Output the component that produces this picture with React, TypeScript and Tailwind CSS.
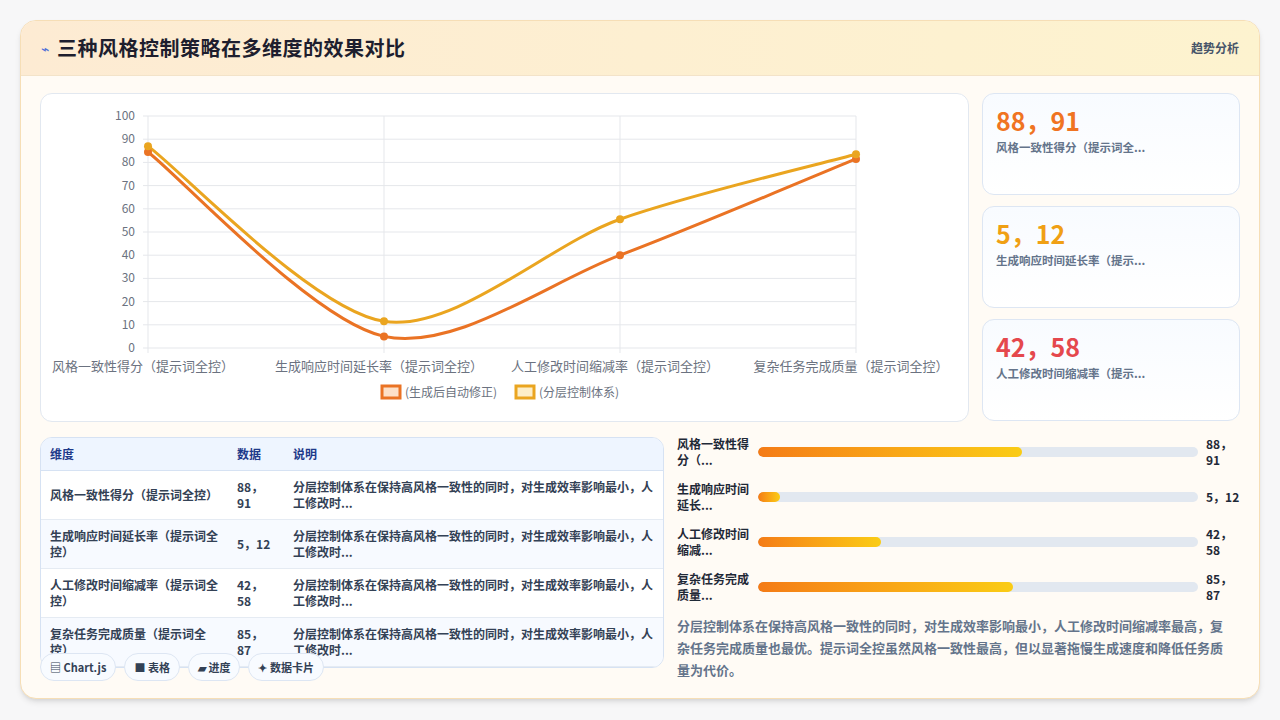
import React from "react";

const F = { fontFamily: '"Noto Sans CJK SC","Noto Sans",sans-serif' };
const cats = ["风格一致性得分（提示词全控）", "生成响应时间延长率（提示词全控）", "人工修改时间缩减率（提示词全控）", "复杂任务完成质量（提示词全控）"];
const xs = [147, 383, 619, 855];
const y = (v: number) => 347 - 2.32 * v;
const a = [84.5, 5, 40, 81.5];
const b = [87, 11.5, 55.5, 83.5];

function path(vals: number[]) {
  const p = vals.map((v, i) => [xs[i], y(v)]);
  let d = `M${p[0][0]},${p[0][1]}`;
  for (let i = 0; i < p.length - 1; i++) {
    const p0 = p[i - 1] || p[i], p1 = p[i], p2 = p[i + 1], p3 = p[i + 2] || p2;
    const t = 0.15;
    const c1x = p1[0] + (p2[0] - p0[0]) * t, c1y = p1[1] + (p2[1] - p0[1]) * t;
    const c2x = p2[0] - (p3[0] - p1[0]) * t, c2y = p2[1] - (p3[1] - p1[1]) * t;
    d += ` C${c1x},${c1y} ${c2x},${c2y} ${p2[0]},${p2[1]}`;
  }
  return d;
}

function Chart() {
  return (
    <svg width="928" height="328" viewBox="40 93 928 328" className="block">
      {[0, 10, 20, 30, 40, 50, 60, 70, 80, 90, 100].map((v) => (
        <g key={v}>
          <line x1={142} x2={855} y1={y(v)} y2={y(v)} stroke="#e5e7eb" />
          <text x={134} y={y(v) + 4} textAnchor="end" fontSize="12" fill="#6b7280" style={F}>{v}</text>
        </g>
      ))}
      {xs.map((x) => <line key={x} x1={x} x2={x} y1={115} y2={352} stroke="#e5e7eb" />)}
      {cats.map((c, i) => (
        <text key={c} x={xs[i] - 5} y={370} textAnchor="middle" fontSize="13" fill="#6b7280" style={F}>{c}</text>
      ))}
      <path d={path(a)} fill="none" stroke="#ea7324" strokeWidth="3" />
      <path d={path(b)} fill="none" stroke="#eaa520" strokeWidth="3" />
      {a.map((v, i) => <circle key={"a" + i} cx={xs[i]} cy={y(v)} r="4" fill="#ea7324" />)}
      {b.map((v, i) => <circle key={"b" + i} cx={xs[i]} cy={y(v)} r="4" fill="#eaa520" />)}
      <rect x={381} y={385} width={18} height={12} fill="#fde0c8" stroke="#ea7324" strokeWidth="3" />
      <text x={404} y={396} fontSize="12" fill="#6b7280" style={F}>(生成后自动修正)</text>
      <rect x={515} y={385} width={18} height={12} fill="#fdeec8" stroke="#eaa520" strokeWidth="3" />
      <text x={538} y={396} fontSize="12" fill="#6b7280" style={F}>(分层控制体系)</text>
    </svg>
  );
}

const rows = [
  ["风格一致性得分（提示词全控）", "88，\n91"],
  ["生成响应时间延长率（提示词全控）", "5，12"],
  ["人工修改时间缩减率（提示词全控）", "42，\n58"],
  ["复杂任务完成质量（提示词全控）", "85，\n87"],
];
const desc = "分层控制体系在保持高风格一致性的同时，对生成效率影响最小，人工修改时...";
const bars = [
  ["风格一致性得分（...", 60, "88，\n91"],
  ["生成响应时间延长...", 5, "5，12"],
  ["人工修改时间缩减...", 28, "42，\n58"],
  ["复杂任务完成质量...", 58, "85，\n87"],
] as const;

export default function App() {
  return (
    <div className="w-[1280px] h-[720px] bg-[#f7f7f8] p-5 overflow-hidden" style={F}>
      <div className="h-[679px] rounded-2xl border border-[#f6deb6] bg-[#fffbf5] overflow-hidden shadow-md flex flex-col">
        <div className="h-[55px] shrink-0 flex items-center justify-between px-5 bg-gradient-to-r from-[#fdebd3] to-[#fdf3cf] border-b border-[#f3e3c9]">
          <div className="flex items-center gap-2">
            <span className="text-[#4f6fd8] text-sm">⌁</span>
            <span className="text-[20px] font-bold text-[#1e1e2e] tracking-[0.5px]">三种风格控制策略在多维度的效果对比</span>
          </div>
          <span className="text-[12px] font-semibold text-[#475569]">趋势分析</span>
        </div>
        <div className="flex-1 px-[19px] pt-[17px] flex flex-col gap-[15px]">
          <div className="flex gap-[13px]">
            <div className="w-[929px] h-[329px] rounded-xl border border-[#e2e8f0] bg-white overflow-hidden">
              <Chart />
            </div>
            <div className="flex-1 flex flex-col gap-[11px]">
              {[["88，91", "text-[#f07422]", "风格一致性得分（提示词全..."], ["5，12", "text-[#f0a014]", "生成响应时间延长率（提示..."], ["42，58", "text-[#e5484d]", "人工修改时间缩减率（提示..."]].map(([v, c, l]) => (
                <div key={v} className="h-[102px] rounded-xl border border-[#dde6f3] bg-gradient-to-b from-[#f8fbff] to-white px-[13px] pt-[11px]">
                  <div className={`text-[25px] font-bold leading-[30px] ${c}`}>{v}</div>
                  <div className="text-[11.5px] font-semibold text-[#64748b] mt-1">{l}</div>
                </div>
              ))}
            </div>
          </div>
          <div className="flex gap-[13px]">
            <div className="relative w-[624px] h-[245px]">
              <div className="h-[231px] rounded-xl border border-[#d6e2f3] bg-white overflow-hidden">
                <div className="flex h-[33px] items-center bg-[#eef5ff] border-b border-[#d6e2f3] text-[12px] font-semibold text-[#1e3a8a]">
                  <div className="w-[196px] pl-[9px]">维度</div>
                  <div className="w-[56px]">数据</div>
                  <div>说明</div>
                </div>
                {rows.map(([d, v], i) => (
                  <div key={i} className={`flex items-center h-[49px] border-b border-[#e5ebf3] text-[12px] font-semibold text-[#334155] leading-[16px] ${i % 2 ? "bg-[#f7faff]" : "bg-white"}`}>
                    <div className="w-[196px] pl-[9px] pr-4">{d}</div>
                    <div className="w-[56px] whitespace-pre">{v}</div>
                    <div className="flex-1 pr-2">{desc}</div>
                  </div>
                ))}
              </div>
              <div className="absolute left-0 top-[216px] flex gap-2 text-[11px] font-semibold text-[#334155]">
                {["▤ Chart.js", "■ 表格", "▰ 进度", "✦ 数据卡片"].map((t) => (
                  <div key={t} className="h-[28px] px-[9px] flex items-center rounded-full border border-[#dde6f3] bg-[#f8fbff]">{t}</div>
                ))}
              </div>
            </div>
            <div className="flex-1 -mt-[8px]">
              {bars.map(([l, w, v]) => (
                <div key={l} className="flex items-center h-[45px] text-[12px] font-semibold text-[#1f2937] leading-[16px]">
                  <div className="w-[81px] pr-1">{l}</div>
                  <div className="w-[440px] h-[10px] rounded-full bg-[#e2e8f0] overflow-hidden">
                    <div className="h-full rounded-full bg-gradient-to-r from-[#f47b16] to-[#facc15]" style={{ width: `${w}%` }} />
                  </div>
                  <div className="pl-[8px] whitespace-pre">{v}</div>
                </div>
              ))}
              <p className="mt-[6px] pr-2 text-[13px] leading-[22px] font-semibold text-[#64748b]">分层控制体系在保持高风格一致性的同时，对生成效率影响最小，人工修改时间缩减率最高，复杂任务完成质量也最优。提示词全控虽然风格一致性最高，但以显著拖慢生成速度和降低任务质量为代价。</p>
            </div>
          </div>
        </div>
      </div>
    </div>
  );
}
